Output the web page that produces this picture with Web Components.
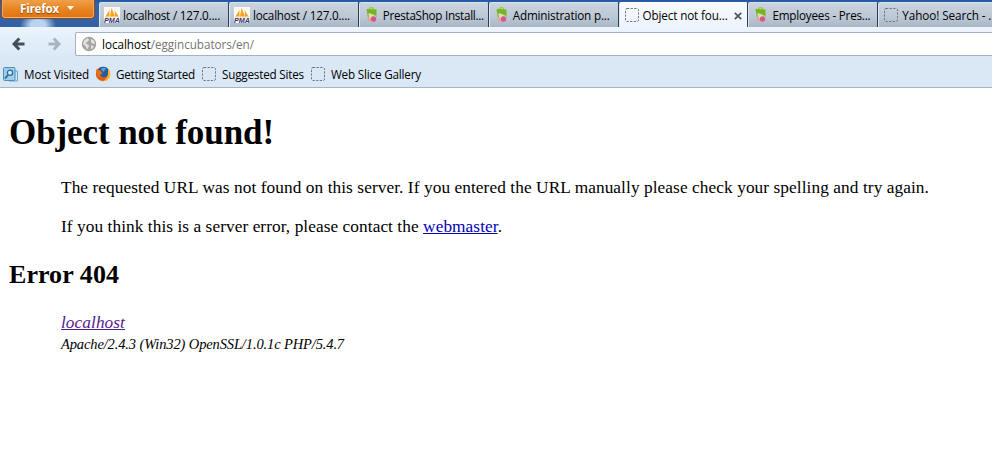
<!DOCTYPE html>
<html lang="en">
<head>
<meta charset="utf-8">
<title>Object not found!</title>
<style>
  body {
    margin: 0;
    background: #fff;
    overflow: hidden;
  }
</style>
</head>
<body>
<browser-window>
  <tab-strip slot="tabs">
    <browser-tab icon="pma" text="97">localhost / 127.0....</browser-tab>
    <browser-tab icon="pma" text="97">localhost / 127.0....</browser-tab>
    <browser-tab icon="presta" text="101">PrestaShop Install...</browser-tab>
    <browser-tab icon="presta" text="97">Administration p...</browser-tab>
    <browser-tab icon="blank" text="85" selected>Object not fou...</browser-tab>
    <browser-tab icon="presta" text="98">Employees - Pres...</browser-tab>
    <browser-tab icon="blank" text="89">Yahoo! Search - .</browser-tab>
  </tab-strip>
  <nav-bar slot="nav"><fit-text width="152"><span style="color:#000">localhost</span>/eggincubators/en/</fit-text></nav-bar>
  <bookmark-bar slot="bookmarks">
    <bookmark-item icon="visited" text="65" style="width:92px">Most Visited</bookmark-item>
    <bookmark-item icon="firefox" text="79" style="width:106px">Getting Started</bookmark-item>
    <bookmark-item icon="blank" text="82" style="width:109px">Suggested Sites</bookmark-item>
    <bookmark-item icon="blank" text="90" style="width:117px">Web Slice Gallery</bookmark-item>
  </bookmark-bar>
  <error-page></error-page>
</browser-window>

<script>
const icons = {
  pma: /* html */`
    <svg width="16" height="16" viewBox="0 0 16 16">
      <rect width="16" height="16" fill="#fbfaf6"/>
      <path d="M1.5 9.5 5.5 3v6.5zM6 9.500 7.500 1l3.500 8.500zM11 9.500 10.700 3.500l4 6z" fill="#f5a21c"/>
      <path d="M1 10h14" stroke="#f8c878" stroke-width=".8"/>
      <text x="0" y="15.600" textLength="16" lengthAdjust="spacingAndGlyphs" font-family="Liberation Sans, sans-serif" font-size="6.500" font-weight="bold" font-style="italic" fill="#34346e">PMA</text>
    </svg>`,
  presta: /* html */`
    <svg width="16" height="16" viewBox="0 0 16 16">
      <path d="M5.500 3V1.500Q7.500-.5 9.500 1.500V3" fill="none" stroke="#9ccb45" stroke-width="1.200"/>
      <path d="M2.500 2 12.500 2.500 12.500 10 4 11z" fill="#76b51b"/>
      <path d="M4.500 6 8 7l4 2-1 3-6 .5z" fill="#d9dcb4"/>
      <path d="M3.500 9.500 6.500 11 7 14.500 4 14z" fill="#e3a79a"/>
      <circle cx="9.500" cy="12" r="2.700" fill="#d8568c"/>
    </svg>`,
  blank: /* html */`
    <svg width="16" height="16" viewBox="0 0 16 16">
      <rect x="1.500" y="1.500" width="13" height="13" rx="1.500" fill="none" stroke="#6e7986" stroke-dasharray="2.300 1.300"/>
    </svg>`,
  visited: /* html */`
    <svg width="16" height="16" viewBox="0 0 16 16">
      <path d="M11 5h3.500v10H6" fill="#cde5f4" stroke="#6aa5c8"/>
      <rect x=".5" y="1.500" width="11.500" height="13" rx="1" fill="#9fcdea" stroke="#4b91bb"/>
      <circle cx="7" cy="6.800" r="2.600" fill="#d7effc" stroke="#246c9c" stroke-width="1.300"/>
      <path d="m5 9-3 3.500" stroke="#246c9c" stroke-width="1.800"/>
    </svg>`,
  firefox: /* html */`
    <svg width="16" height="16" viewBox="0 0 16 16">
      <circle cx="8" cy="8" r="7.200" fill="#df5d12"/>
      <path d="M2.500 4Q4 1 8 .8 12.500 1 14 4.500L13 9Q11 12 7.500 11 5 10 5 8L7.500 7 5 6z" fill="#235c9f"/>
      <path d="M6 2.500Q8.500.8 11.500 2.500 9 3.500 9 6 7 5 6 2.500z" fill="#52a5d8"/>
      <path d="M.8 5 2 2.500 4 4.200 6.500 4.500 5.800 6 8 7 5.500 8.300 4 12z" fill="#e8711c"/>
      <path d="M13 3Q16 6 15 10.500 12.500 15.500 8 15 12.500 12.500 13 8z" fill="#f9b232"/>
    </svg>`,
  globe: /* html */`
    <svg width="16" height="16" viewBox="0 0 16 16">
      <circle cx="8" cy="8" r="7" fill="#a5a5a5"/>
      <path d="M3 4.500 6.500 2 8 3.500 7 5.500 5 6.500 5.500 8 8 9 7.500 11 6 13.500 4.500 10 2 8zM10 3l3 1.500 1 3-2 .5-2-2zM10 9.500l3 .5-1.500 2.500L10 13z" fill="#e2e2e2"/>
      <circle cx="8" cy="8" r="6.700" fill="none" stroke="#a0a0a0" stroke-width=".8"/>
    </svg>`,
};

// A line of text spaced out or in to a given width
class FitText extends HTMLElement {
  constructor() {
    super();
    this.attachShadow({ mode: "open" });
  }

  connectedCallback() {
    this.shadowRoot.innerHTML = /* html */`
    <style>
      :host { display: inline-block; white-space: nowrap; }
    </style>
    <slot></slot>`;
    requestAnimationFrame(() => this.fit());
    this.fit();
  }

  fit() {
    this.style.letterSpacing = "0px";
    const range = document.createRange();
    range.selectNodeContents(this);
    const natural = range.getBoundingClientRect().width;
    const count = this.textContent.length;
    if (!natural || !count) return;
    this.style.letterSpacing = `${(Number(this.getAttribute("width")) - natural) / count}px`;
  }
}

class BrowserWindow extends HTMLElement {
  constructor() {
    super();
    this.attachShadow({ mode: "open" });
  }

  connectedCallback() {
    this.shadowRoot.innerHTML = /* html */`
    <style>
      :host {
        display: flex;
        flex-direction: column;
        width: 992px;
        height: 452px;
        overflow: hidden;
        font: 11.7px "Open Sans", "Noto Sans", sans-serif;
        color: #000;
      }
      .toolbars {
        background: linear-gradient(#edf4fc, #dae8f6 30px);
        border-bottom: 1px solid #a6b4c5;
      }
    </style>
    <slot name="tabs"></slot>
    <div class="toolbars">
      <slot name="nav"></slot>
      <slot name="bookmarks"></slot>
    </div>
    <slot></slot>`;
  }
}

class TabStrip extends HTMLElement {
  constructor() {
    super();
    this.attachShadow({ mode: "open" });
  }

  connectedCallback() {
    this.shadowRoot.innerHTML = /* html */`
    <style>
      :host {
        display: flex;
        align-items: flex-start;
        height: 27px;
        background:
          radial-gradient(ellipse 18px 12px at 38px 25px, #b9d4f3 40%, transparent),
          linear-gradient(#2459a4, #2e65ad 5px, #3261a5);
      }
      .menu {
        box-sizing: border-box;
        display: flex;
        flex: none;
        align-items: center;
        gap: 8px;
        width: 94px;
        height: 19px;
        margin: 0 4px 0 1px;
        padding: 0 0 2px 18px;
        border: 1px solid #8e4a1c;
        border-top: 0;
        border-radius: 0 0 4px 4px;
        background: linear-gradient(#f0a04a, #e6821e 55%, #dd7413);
        box-shadow: inset 0 -1px #f6b36c, inset 1px 0 #f2aa5f, inset -1px 0 #f2aa5f;
        color: #fff;
        font-weight: bold;
        font-size: 11.5px;
        text-shadow: 0 1px 1px #8a4708;
      }
      .tabs {
        display: flex;
        flex: 1;
        padding-top: 2px;
        overflow: hidden;
      }
    </style>
    <div class="menu">
      <fit-text width="39">Firefox</fit-text>
      <svg width="7" height="4"><path d="M0 0h7L3.500 4z" fill="#fff"/></svg>
    </div>
    <div class="tabs"><slot></slot></div>`;
  }
}

class BrowserTab extends HTMLElement {
  constructor() {
    super();
    this.attachShadow({ mode: "open" });
  }

  connectedCallback() {
    const close = this.hasAttribute("selected")
      ? `<svg width="8" height="8" viewBox="0 0 8 8"><path d="m.8.8 6.400 6.400m0-6.400L.8 7.200" stroke="#4b5665" stroke-width="1.700"/></svg>`
      : "";
    this.shadowRoot.innerHTML = /* html */`
    <style>
      :host {
        box-sizing: border-box;
        display: flex;
        flex: none;
        align-items: center;
        width: 129.9px;
        height: 25px;
        padding-left: 4px;
        border-right: 1px solid #283d5a;
        border-top: 1px solid #dae3ee;
        border-left: 1px solid #dfe6ee;
        border-radius: 2px 2px 0 0;
        background: linear-gradient(#cad4df, #bbc7d4 60%, #a9b6c5);
      }
      :host([selected]) {
        background: linear-gradient(#f9fbfe, #edf4fc);
        border-top-color: #fff;
      }
      svg { flex: none; }
      fit-text { margin-left: 3px; }
      .close { display: flex; margin: 1px 0 0 6px; }
    </style>
    ${icons[this.getAttribute("icon")]}
    <fit-text width="${this.getAttribute("text")}">${this.textContent}</fit-text>
    <span class="close">${close}</span>`;
  }
}

class NavBar extends HTMLElement {
  constructor() {
    super();
    this.attachShadow({ mode: "open" });
  }

  connectedCallback() {
    this.shadowRoot.innerHTML = /* html */`
    <style>
      :host {
        display: flex;
        align-items: center;
        height: 34px;
      }
      .back { margin-left: 12px; }
      .forward { margin-left: 23px; }
      .url {
        box-sizing: border-box;
        display: flex;
        flex: 1;
        align-items: center;
        gap: 5px;
        height: 24px;
        margin: 0 0 0 14px;
        padding-left: 5px;
        border: 1px solid #a3b3c5;
        border-right: 0;
        border-radius: 2px 0 0 2px;
        background: #fff;
        color: #757575;
      }
    </style>
    <svg class="back" width="13" height="14" viewBox="0 0 13 14"><path d="M12.500 7H3M7.300 1.500 2 7l5.300 5.500" fill="none" stroke="#454d58" stroke-width="3"/></svg>
    <svg class="forward" width="13" height="14" viewBox="0 0 13 14"><path d="M.5 7H10M5.700 1.500 11 7l-5.300 5.500" fill="none" stroke="#aab4c0" stroke-width="3"/></svg>
    <div class="url">${icons.globe}<slot></slot></div>`;
  }
}

class BookmarkBar extends HTMLElement {
  constructor() {
    super();
    this.attachShadow({ mode: "open" });
  }

  connectedCallback() {
    this.shadowRoot.innerHTML = /* html */`
    <style>
      :host {
        display: flex;
        align-items: center;
        height: 26px;
        padding-left: 4px;
      }
    </style>
    <slot></slot>`;
  }
}

class BookmarkItem extends HTMLElement {
  constructor() {
    super();
    this.attachShadow({ mode: "open" });
  }

  connectedCallback() {
    this.shadowRoot.innerHTML = /* html */`
    <style>
      :host {
        display: flex;
        align-items: center;
        gap: 4px;
      }
      svg { margin: 0 1px 1px -1px; }
    </style>
    ${icons[this.getAttribute("icon")]}
    <fit-text width="${this.getAttribute("text")}">${this.textContent}</fit-text>`;
  }
}

class ErrorPage extends HTMLElement {
  constructor() {
    super();
    this.attachShadow({ mode: "open" });
  }

  connectedCallback() {
    this.shadowRoot.innerHTML = /* html */`
    <style>
      :host {
        display: block;
        padding: 0 9px;
        font: 17.3px/20px "Liberation Serif", serif;
      }
      h1 { margin: 25px 0 0; font-size: 35px; line-height: 40px; }
      h2 { margin: 23px 0 0; font-size: 26px; line-height: 30px; }
      p { margin: 19px 0 0 52px; }
      h1 + p { margin-top: 25px; }
      address { margin: 23px 0 0 52px; }
      fit-text { display: block; }
      a { color: #0000b8; text-decoration-skip-ink: none; }
      a.seen { color: #551a8b; }
      .server { font-size: 14.5px; line-height: 22px; }
    </style>
    <h1><fit-text width="265">Object not found!</fit-text></h1>
    <p><fit-text width="868">The requested URL was not found on this server. If you entered the URL manually please check your spelling and try again.</fit-text></p>
    <p><fit-text width="441">If you think this is a server error, please contact the <a href="#">webmaster</a>.</fit-text></p>
    <h2><fit-text width="110">Error 404</fit-text></h2>
    <address>
      <fit-text width="64"><a class="seen" href="#">localhost</a></fit-text>
      <fit-text class="server" width="283">Apache/2.4.3 (Win32) OpenSSL/1.0.1c PHP/5.4.7</fit-text>
    </address>`;
  }
}

customElements.define("browser-window", BrowserWindow);
customElements.define("tab-strip", TabStrip);
customElements.define("browser-tab", BrowserTab);
customElements.define("nav-bar", NavBar);
customElements.define("bookmark-bar", BookmarkBar);
customElements.define("bookmark-item", BookmarkItem);
customElements.define("error-page", ErrorPage);
customElements.define("fit-text", FitText);
</script>
</body>
</html>
